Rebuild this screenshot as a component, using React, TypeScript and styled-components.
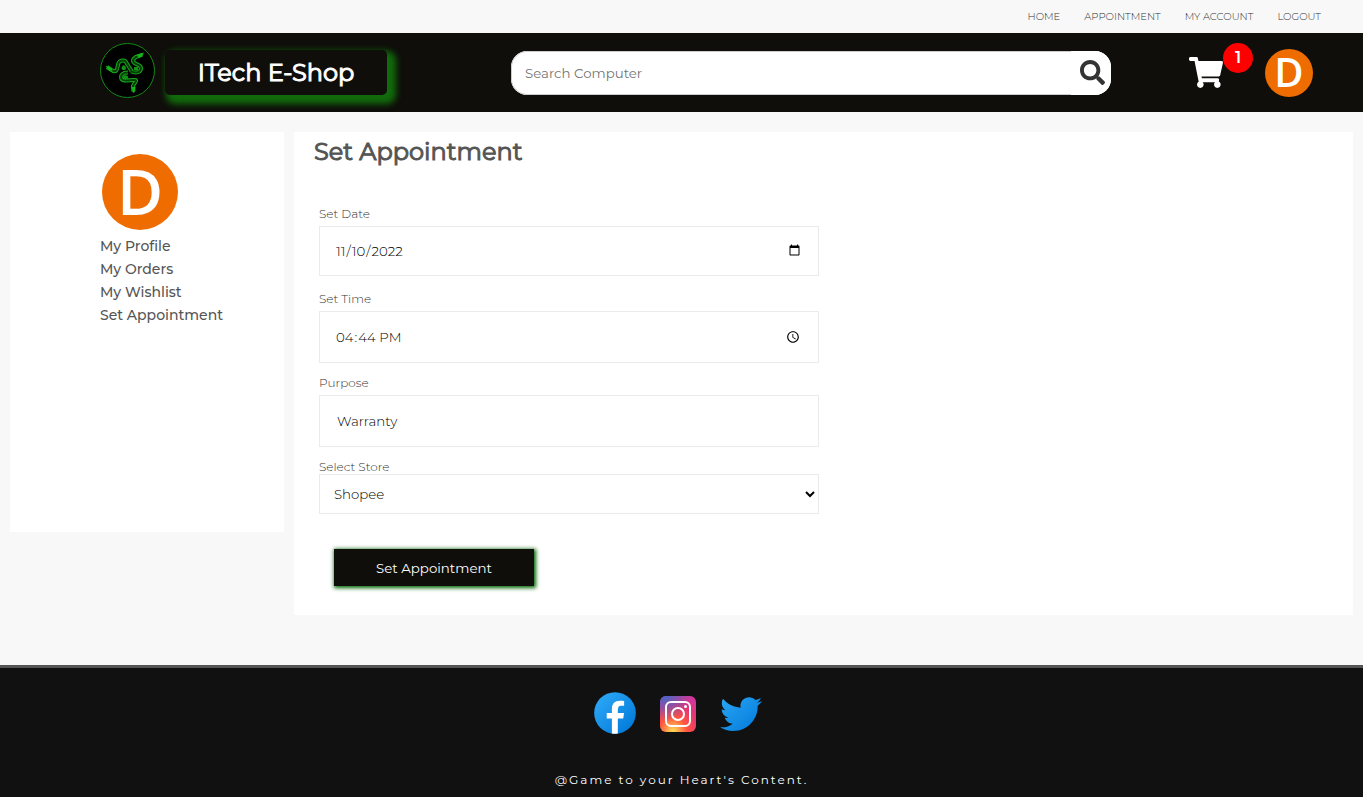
import React from 'react';
import styled, { createGlobalStyle } from 'styled-components';
import { FaSearch, FaShoppingCart } from 'react-icons/fa';

const GlobalStyle = createGlobalStyle`
  *, *::before, *::after { box-sizing: border-box; }
  body {
    margin: 0;
    background: #f8f8f8;
    color: #555;
    font-family: Montserrat, Inter, sans-serif;
  }
  input, select, button { font-family: inherit; }
  a { color: inherit; text-decoration: none; }
`;

const TopNav = styled.nav`
  display: flex;
  justify-content: flex-end;
  align-items: center;
  gap: 24px;
  height: 33px;
  padding: 0 42px;
  color: #333;
  font-size: 10px;
  font-weight: 300;
`;

const Header = styled.header`
  display: flex;
  align-items: center;
  height: 79px;
  padding: 0 50px 0 100px;
  background: #0f0e0a;
`;

const Brand = styled.a`
  display: flex;
  align-items: center;
  gap: 10px;
  > svg { margin-bottom: 4px; }
`;

const BrandName = styled.span`
  width: 222px;
  border-radius: 5px;
  background: #0f0e0a;
  box-shadow: 5px 5px 6px 4px #116b0b;
  color: #fff;
  font-size: 24px;
  font-weight: 400;
  -webkit-text-stroke: 1px currentColor;
  line-height: 45px;
  text-align: center;
`;

const SearchForm = styled.form`
  display: flex;
  flex: 1;
  height: 44px;
  margin: 0 79px 0 124px;
  border-radius: 16px;
  background: #fff;
  overflow: hidden;
`;

const SearchInput = styled.input`
  flex: 1;
  min-width: 0;
  padding: 0 13px;
  border: 1px solid #ccc;
  border-right: 0;
  border-radius: 16px 0 0 16px;
  outline: 0;
  font-weight: 400;
  &::placeholder { color: #757575; opacity: 1; }
`;

const SearchButton = styled.button`
  display: grid;
  place-items: center;
  width: 40px;
  padding: 0 0 0 2px;
  border: 0;
  background: #fff;
  color: #333;
  font-size: 25px;
`;

const Account = styled.div`
  display: flex;
  align-items: center;
  gap: 42px;
`;

const CartLink = styled.a`
  position: relative;
  display: block;
  color: #fff;
  svg { display: block; width: 34px; height: 31px; margin-left: -1px; }
`;

const CartBadge = styled.span`
  position: absolute;
  left: 33px;
  bottom: 15px;
  width: 30px;
  border-radius: 50%;
  background: #f00;
  font-size: 16px;
  font-weight: 600;
  line-height: 30px;
  text-align: center;
`;

const Avatar = styled.span<{ $size: number; $letter: number }>`
  display: block;
  width: ${p => p.$size}px;
  height: ${p => p.$size}px;
  border-radius: 50%;
  background: #ef6c00;
  color: #fff;
  font-family: 'Open Sans', sans-serif;
  font-size: ${p => p.$letter}px;
  font-weight: 600;
  line-height: ${p => p.$size - 2}px;
  text-align: center;
`;

const Main = styled.main`
  display: grid;
  grid-template-columns: 274px 1fr;
  align-items: start;
  gap: 10px;
  padding: 20px 10px 50px;
`;

const Sidebar = styled.aside`
  min-height: 400px;
  padding: 22px 20px 20px 90px;
  background: #fff;
`;

const SideAvatar = styled.div`
  padding: 0 2px 5px;
`;

const SideNav = styled.nav`
  display: flex;
  flex-direction: column;
  font-size: 14px;
  font-weight: 500;
  line-height: 23px;
`;

const Content = styled.section`
  padding: 0 20px 29px;
  background: #fff;
`;

const PageTitle = styled.h1`
  margin: 0 0 35px;
  font-size: 24px;
  font-weight: 400;
  -webkit-text-stroke: 1px currentColor;
  line-height: 40px;
`;

const Form = styled.form`
  max-width: 505px;
  padding-left: 5px;
`;

const Field = styled.div<{ $after?: number }>`
  display: flex;
  flex-direction: column;
  margin-bottom: ${p => p.$after ?? 13}px;
`;

const Label = styled.label<{ $tight?: boolean }>`
  margin-bottom: ${p => (p.$tight ? 0 : 5)}px;
  color: #333;
  font-size: 12px;
  font-weight: 300;
  line-height: 14px;
`;

const Input = styled.input<{ $height: number }>`
  height: ${p => p.$height}px;
  padding: 0 ${p => (p.type === 'text' ? 17 : 15)}px;
  border: 1px solid #ebebeb;
  background: #fff;
  color: #000;
  font-weight: 300;
`;

const Select = styled.select`
  height: 40px;
  padding: 0 0 0 10px;
  border: 1px solid #ebebeb;
  background: #fff;
  color: #000;
  font-weight: 300;
`;

const Submit = styled.button`
  display: block;
  width: 200px;
  height: 37px;
  margin: 35px 0 0 15px;
  border: 0;
  background: #0f0e0a;
  box-shadow: 1px 1px 4px 1px #006400;
  color: #fff;
  font-weight: 400;
`;

const Footer = styled.footer`
  display: flex;
  flex-direction: column;
  align-items: center;
  gap: 32px;
  min-height: 132px;
  padding: 20px 0 8px;
  border-top: 3px solid #555;
  background: #111;
`;

const Socials = styled.div`
  display: flex;
  gap: 13px;
  padding-right: 7px;
  svg { display: block; }
`;

const Tagline = styled.p`
  margin: 0;
  color: #fff;
  font-size: 12px;
  letter-spacing: 2px;
  line-height: 20px;
`;

const SNAKES = [
  'M52.5 20.5 L48.5 22 C44.5 23 42 26 43.5 28 C45 31 50.5 30 51 34 C51 38.5 46 39.5 41 37.5',
  'M17 33 L21.5 36 C28 40 27 33 28.5 29 C30 25.5 35.5 25.5 36.5 29 L41.5 37',
  'M43.5 57.5 L43 52 C43.5 49.5 48 47 45 46 C40 45.5 34 48.5 31.5 45 C30 41 33 38.5 38 38.5',
];

function SerpentLogo() {
  return (
    <svg width="55" height="55" viewBox="10 9 55 55" fill="none" aria-hidden="true">
      <circle cx="37.5" cy="36.5" r="27" fill="#000" stroke="#128a12" />
      {SNAKES.map(d => (
        <path key={d} d={d} stroke="#17a91c" strokeWidth="4" strokeLinejoin="round" />
      ))}
      {SNAKES.map(d => (
        <path key={d + 'i'} d={d} stroke="#053f06" strokeWidth="2" strokeLinejoin="round" />
      ))}
      <path d="M31.5 34 C33 30 35 31 36 34 C36 37 32 37 31.5 34z M33 42.5 C36 40 39 42 38 44.5 C36 46 33 45 33 42.5z M44 33 l4 0 0 3-4 0z" fill="#129418" />
      <path d="M47 21 l7-2.5-2.5 4.5-3 1z M15.5 31.5 l6 2.5 1 3-4-1z M41.5 53 l4 0-.8 5-1.7 1z" fill="#17b51c" />
    </svg>
  );
}

function FacebookIcon() {
  return (
    <svg width="50" height="50" viewBox="0 0 48 48" aria-hidden="true">
      <linearGradient id="fb" x1="10" y1="10" x2="40.6" y2="40.6" gradientUnits="userSpaceOnUse">
        <stop stopColor="#2aa4f4" />
        <stop offset="1" stopColor="#007ad9" />
      </linearGradient>
      <circle cx="24" cy="24" r="20" fill="url(#fb)" />
      <path fill="#fff" d="M26.707,29.301h5.176l0.813-5.258h-5.989v-2.874c0-2.184,0.714-4.121,2.757-4.121h3.283V12.46c-0.577-0.078-1.797-0.248-4.102-0.248c-4.814,0-7.636,2.542-7.636,8.334v3.498H16.06v5.258h4.948v14.452C21.988,43.9,22.981,44,24,44c0.921,0,1.82-0.084,2.707-0.204V29.301z" />
    </svg>
  );
}

function InstagramIcon() {
  return (
    <svg width="50" height="50" viewBox="0 0 50 50" fill="none" aria-hidden="true">
      <radialGradient id="ig" cx="20" cy="43" r="42" gradientUnits="userSpaceOnUse">
        <stop stopColor="#fd5" />
        <stop offset=".33" stopColor="#ff543f" />
        <stop offset=".6" stopColor="#e63771" />
        <stop offset="1" stopColor="#c837ab" />
      </radialGradient>
      <radialGradient id="igBlue" cx="12" cy="7" r="26" gradientUnits="userSpaceOnUse">
        <stop stopColor="#4168c9" />
        <stop offset="1" stopColor="#4168c9" stopOpacity="0" />
      </radialGradient>
      <rect x="7" y="8" width="36" height="36" rx="6" fill="url(#ig)" />
      <rect x="7" y="8" width="36" height="36" rx="6" fill="url(#igBlue)" />
      <rect x="13" y="14" width="24" height="24" rx="5" stroke="#fff" strokeWidth="2" />
      <circle cx="25" cy="26" r="6" stroke="#fff" strokeWidth="2" />
      <circle cx="32.5" cy="18.5" r="1.5" fill="#fff" />
    </svg>
  );
}

function TwitterIcon() {
  return (
    <svg width="50" height="50" viewBox="2.5 1 43 43" aria-hidden="true">
      <linearGradient id="tw" x1="10" y1="8" x2="37" y2="40" gradientUnits="userSpaceOnUse">
        <stop stopColor="#2aa4f4" />
        <stop offset="1" stopColor="#007ad9" />
      </linearGradient>
      <path fill="url(#tw)" d="M42,12.429c-1.323,0.586-2.746,0.977-4.247,1.162c1.526-0.906,2.7-2.351,3.251-4.058c-1.428,0.837-3.01,1.452-4.693,1.776C34.967,9.884,33.05,9,30.926,9c-4.08,0-7.387,3.278-7.387,7.32c0,0.572,0.067,1.129,0.193,1.67c-6.138-0.308-11.582-3.226-15.224-7.654c-0.64,1.082-1,2.349-1,3.686c0,2.541,1.301,4.778,3.285,6.096c-1.211-0.037-2.351-0.374-3.349-0.914c0,0.022,0,0.055,0,0.086c0,3.551,2.547,6.508,5.923,7.181c-0.617,0.169-1.269,0.263-1.941,0.263c-0.477,0-0.942-0.054-1.392-0.135c0.94,2.902,3.667,5.023,6.898,5.086c-2.528,1.96-5.712,3.134-9.174,3.134c-0.598,0-1.183-0.034-1.761-0.104C9.268,36.786,13.152,38,17.321,38c13.585,0,21.017-11.156,21.017-20.834c0-0.317-0.01-0.633-0.025-0.945C39.763,15.197,41.013,13.905,42,12.429" />
    </svg>
  );
}

export default function App() {
  return (
    <>
      <GlobalStyle />
      <TopNav>
        <a href="#home">HOME</a>
        <a href="#appointment">APPOINTMENT</a>
        <a href="#account">MY ACCOUNT</a>
        <a href="#logout">LOGOUT</a>
      </TopNav>
      <Header>
        <Brand href="#home">
          <SerpentLogo />
          <BrandName>ITech E-Shop</BrandName>
        </Brand>
        <SearchForm role="search" onSubmit={e => e.preventDefault()}>
          <SearchInput type="text" placeholder="Search Computer" aria-label="Search Computer" />
          <SearchButton type="submit" aria-label="Search"><FaSearch /></SearchButton>
        </SearchForm>
        <Account>
          <CartLink href="#cart" aria-label="Cart">
            <FaShoppingCart preserveAspectRatio="none" />
            <CartBadge>1</CartBadge>
          </CartLink>
          <Avatar $size={48} $letter={40}>D</Avatar>
        </Account>
      </Header>
      <Main>
        <Sidebar>
          <SideAvatar><Avatar $size={76} $letter={63}>D</Avatar></SideAvatar>
          <SideNav>
            <a href="#profile">My Profile</a>
            <a href="#orders">My Orders</a>
            <a href="#wishlist">My Wishlist</a>
            <a href="#appointment">Set Appointment</a>
          </SideNav>
        </Sidebar>
        <Content>
          <PageTitle>Set Appointment</PageTitle>
          <Form onSubmit={e => e.preventDefault()}>
            <Field $after={16}>
              <Label htmlFor="date">Set Date</Label>
              <Input id="date" type="date" defaultValue="2022-11-10" $height={50} />
            </Field>
            <Field>
              <Label htmlFor="time">Set Time</Label>
              <Input id="time" type="time" defaultValue="16:44" $height={52} />
            </Field>
            <Field>
              <Label htmlFor="purpose">Purpose</Label>
              <Input id="purpose" type="text" defaultValue="Warranty" $height={52} />
            </Field>
            <Field $after={0}>
              <Label htmlFor="store" $tight>Select Store</Label>
              <Select id="store" defaultValue="Shopee">
                <option>Shopee</option>
                <option>Lazada</option>
              </Select>
            </Field>
            <Submit type="submit">Set Appointment</Submit>
          </Form>
        </Content>
      </Main>
      <Footer>
        <Socials>
          <a href="#facebook" aria-label="Facebook"><FacebookIcon /></a>
          <a href="#instagram" aria-label="Instagram"><InstagramIcon /></a>
          <a href="#twitter" aria-label="Twitter"><TwitterIcon /></a>
        </Socials>
        <Tagline>@Game to your Heart's Content.</Tagline>
      </Footer>
    </>
  );
}
